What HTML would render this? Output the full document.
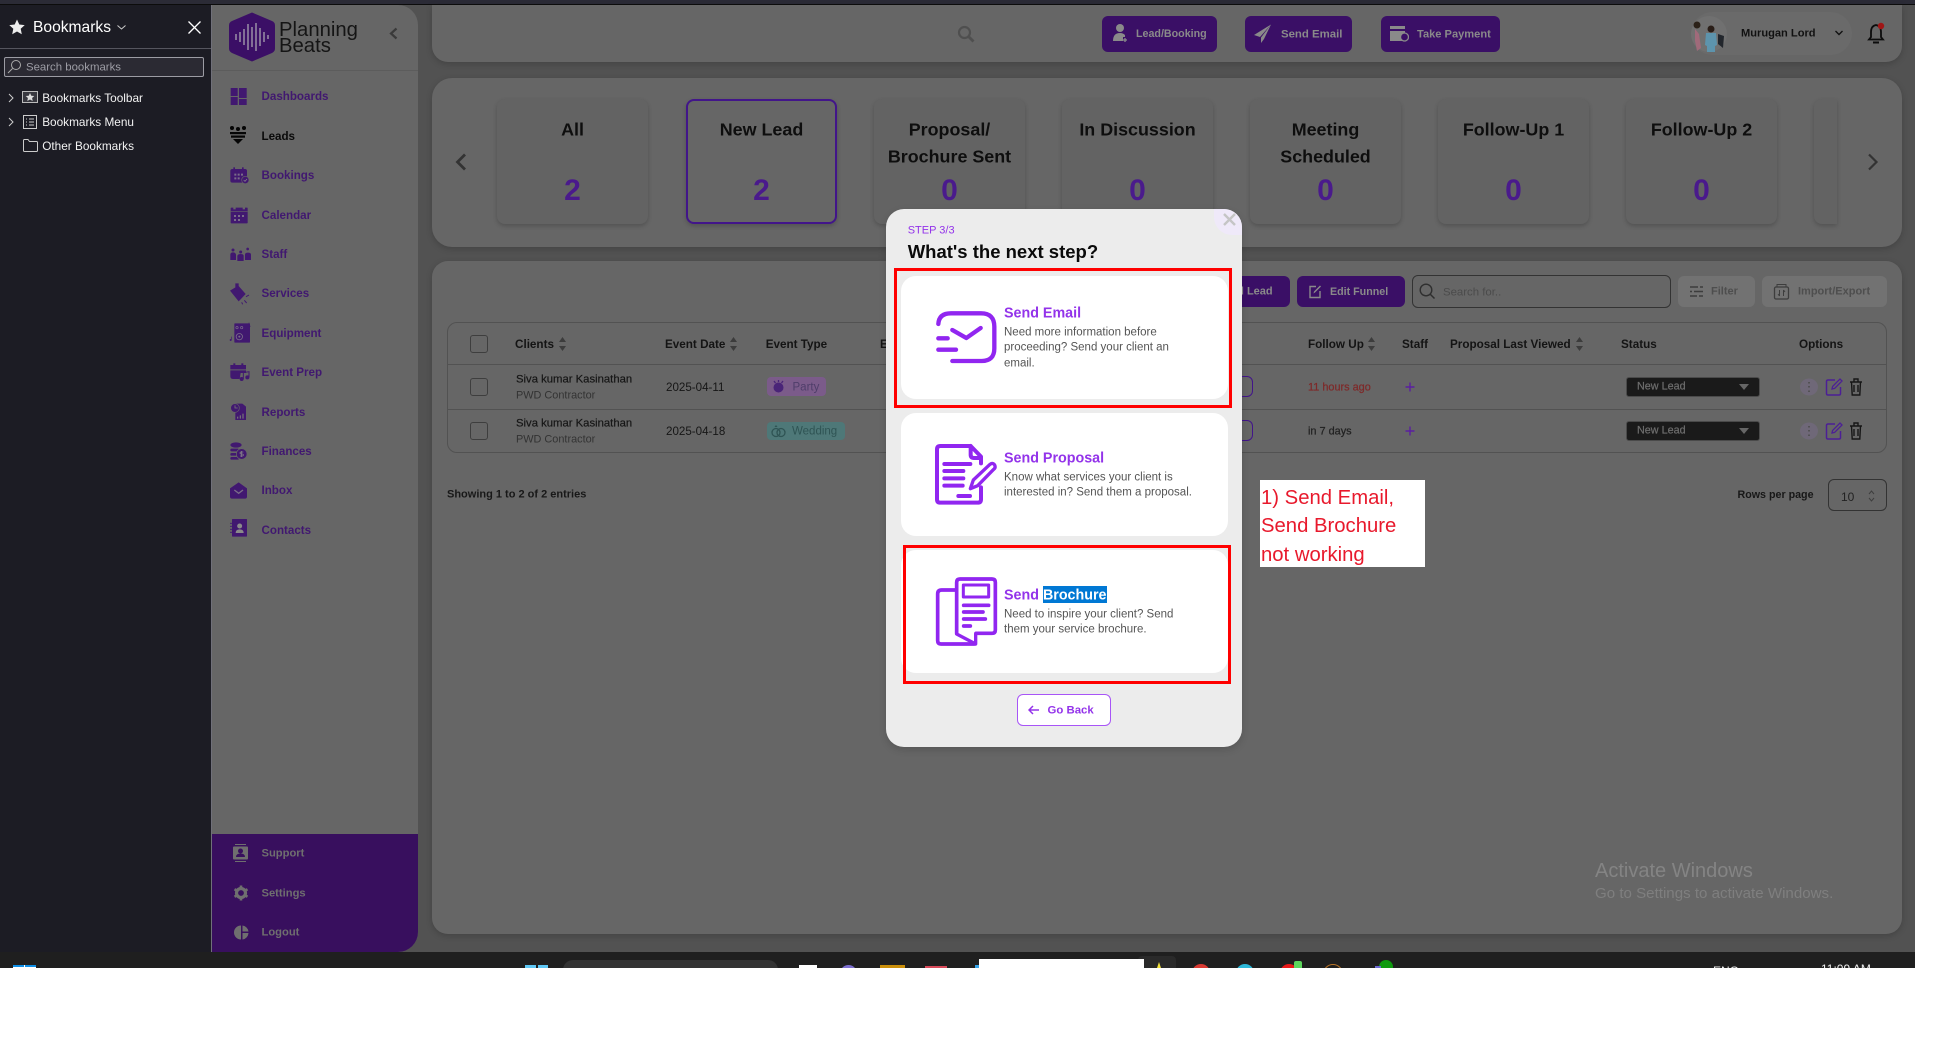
<!DOCTYPE html>
<html><head><meta charset="utf-8"><title>Planning Beats</title>
<style>
html,body{margin:0;padding:0;background:#fff}
body{width:1947px;height:1037px;position:relative;overflow:hidden;font-family:"Liberation Sans",sans-serif}
div,span,svg{position:absolute;box-sizing:border-box}
span.i{position:static}
.t{white-space:nowrap;transform:translateY(calc(-50% + 1.2px));line-height:1.2}
.nav{left:261.5px;font-size:11.6px;font-weight:700;color:#411870}
.bot{left:261.5px;font-size:11.4px;font-weight:700;color:#6f6f6f}
.panel{background:#666;box-shadow:0 2px 7px rgba(0,0,0,.18)}
.btn{background:#3a0f66;border-radius:6px}
.btxt{font-size:11px;font-weight:700;color:#8a8a8a}
.card{top:99px;width:151px;height:125px;background:#636363;border-radius:8px;box-shadow:0 2px 5px rgba(0,0,0,.2)}
.ct{left:0;width:100%;text-align:center;font-size:17.9px;font-weight:700;color:#0e0e0e;transform:translateY(calc(-50% + .4px));line-height:1.2}
.cn{left:0;width:100%;text-align:center;font-size:30px;font-weight:700;color:#4a1a8c;transform:translateY(calc(-50% + 1.2px));top:91px;line-height:1.2}
.th{font-size:11.7px;font-weight:700;color:#141414}
.cb{width:18px;height:18px;border:1px solid #3e3e3e;border-radius:3px}
.td{font-size:11.3px;color:#161616}
.mt{left:1004px;font-size:14.3px;font-weight:700;color:#9333ea}
.md{left:1004px;font-size:11.5px;color:#555;margin-top:1px}
.mc{left:901px;width:327px;height:123px;background:#fff;border-radius:15px}
.red{border:3px solid #f00}
.sel{left:1626px;width:134px;height:20px;background:#1a1a1a;border:1px solid #4a4a4a;border-radius:3px}
.tree{font-size:11.8px;color:#f2f2f2;left:42.2px}
.sort{width:7px;height:14px}
</style></head><body>
<div style="left:0;top:0;width:1915px;height:4px;background:#2b2b36"></div>
<div style="left:0;top:4px;width:1915px;height:948px;background:#525252"></div>
<div style="left:0;top:4px;width:1915px;height:1px;background:#0c0c0c;z-index:5"></div>

<!-- bookmarks -->
<div style="left:0;top:4px;width:211px;height:948px;background:#1c1c24"></div>
<div style="left:211px;top:4px;width:1px;height:948px;background:#70707a"></div>
<svg style="left:9px;top:19px" width="16" height="16" viewBox="0 0 16 16"><path d="M8 .5l2.3 5 5.4.6-4 3.7 1.1 5.4L8 12.5l-4.800 2.700 1.100-5.400-4-3.700 5.400-.6z" fill="#ededed"/></svg>
<div class="t" style="left:33px;top:27px;font-size:15.600px;color:#fff">Bookmarks</div>
<svg style="left:117px;top:24px" width="9" height="7" viewBox="0 0 9 7"><path d="M.5 1.500l4 3.500 4-3.500" stroke="#ccc" fill="none"/></svg>
<svg style="left:188px;top:21px" width="13" height="13" viewBox="0 0 13 13"><path d="M.5.5l12 12M12.500.5l-12 12" stroke="#fff" stroke-width="1.300"/></svg>
<div style="left:0;top:48px;width:211px;height:1px;background:#55555e"></div>
<div style="left:4px;top:57px;width:200px;height:20px;background:#2b2a33;border:1px solid #9c9ca4;border-radius:2px"></div>
<svg style="left:7px;top:59px" width="15" height="15" viewBox="0 0 15 15"><circle cx="9" cy="6" r="4.500" stroke="#aaa" fill="none"/><path d="M5.500 9.500L1 14" stroke="#aaa"/></svg>
<div class="t" style="left:26px;top:67px;font-size:11.400px;color:#9d9da5">Search bookmarks</div>
<svg style="left:8px;top:93px" width="6" height="10" viewBox="0 0 6 10"><path d="M1 1l4 4-4 4" stroke="#ccc" fill="none"/></svg>
<svg style="left:8px;top:117px" width="6" height="10" viewBox="0 0 6 10"><path d="M1 1l4 4-4 4" stroke="#ccc" fill="none"/></svg>
<svg style="left:22px;top:91px" width="16" height="13" viewBox="0 0 16 13"><rect x=".5" y=".5" width="15" height="11" fill="#38383f" stroke="#bbb"/><path d="M8 2l1.300 2.700 3 .3-2.200 2 .6 3L8 8.500 5.300 10l.6-3-2.200-2 3-.3z" fill="#ddd"/></svg>
<svg style="left:23px;top:115px" width="14" height="14" viewBox="0 0 14 14"><rect x=".5" y=".5" width="13" height="13" fill="none" stroke="#ccc"/><path d="M3 4h1M6 4h5M3 7h1M6 7h5M3 10h1M6 10h5" stroke="#ccc"/></svg>
<svg style="left:23px;top:139px" width="15" height="13" viewBox="0 0 15 13"><path d="M.5 1.500q0-1 1-1h3.500l1.500 2h7q1 0 1 1v8q0 1-1 1h-12q-1 0-1-1z" fill="none" stroke="#ccc"/></svg>
<div class="t tree" style="top:97px">Bookmarks Toolbar</div>
<div class="t tree" style="top:121px">Bookmarks Menu</div>
<div class="t tree" style="top:145.200px">Other Bookmarks</div>

<!-- sidebar -->
<div style="left:212px;top:5px;width:206px;height:947px;background:#666;border-radius:0 20px 20px 0"></div>
<div style="left:212px;top:70px;width:206px;height:1px;background:#5c5c5c"></div>
<svg style="left:229px;top:12px" width="46" height="50" viewBox="0 0 46 50"><path d="M23 .5L43 9q3 1.300 3 4.500v23q0 3-3 4.500L23 49.500 3 41q-3-1.500-3-4.500v-23Q0 10.300 3 9z" fill="#3b0f66"/><path d="M7 22v6M11 20v10M15 17v16M19 12v26M23 15v20M27 11v28M31 16v18M35 20v10M39 23v4" stroke="#8a7a9c" stroke-width="1.800"/></svg>
<div style="left:279px;top:22px;font-size:20.300px;line-height:16px;color:#151515;white-space:nowrap">Planning<br>Beats</div>
<svg style="left:389px;top:27px" width="9" height="13" viewBox="0 0 9 13"><path d="M7.500 1.500l-5.500 5 5.500 5" stroke="#3a3a3a" stroke-width="2.200" fill="none"/></svg>

<svg style="left:229px;top:86px" width="22" height="22" viewBox="0 0 22 22" fill="#411870"><rect x="1.700" y="2" width="7" height="8"/><rect x="10" y="2" width="7.700" height="10"/><rect x="1.700" y="11" width="7" height="8"/><rect x="10" y="13" width="7.700" height="6"/></svg>
<svg style="left:229px;top:125px" width="20" height="20" viewBox="0 0 20 20" fill="#050505"><circle cx="3" cy="3" r="2"/><circle cx="9" cy="4" r="2"/><circle cx="15" cy="3" r="2"/><rect x="1" y="7" width="16" height="2.200"/><rect x="2" y="10.500" width="14" height="2.200"/><path d="M4 14h10l-5 5z"/></svg>

<svg style="left:226px;top:160px" width="30" height="190" viewBox="0 0 90 570" fill="#411870">
<rect x="13" y="27" width="50" height="41" rx="6"/><rect x="22" y="22" width="5" height="8"/><rect x="48" y="22" width="5" height="8"/>
<path d="M25 41h6v6h-6zM35 41h6v6h-6zM45 41h6v6h-6zM25 52h6v6h-6zM35 52h6v6h-6z" fill="#7a6d88"/>
<circle cx="58" cy="60" r="11" fill="#411870" stroke="#666" stroke-width="2"/><path d="M53 60l4 4 6-7" stroke="#8a8a8a" stroke-width="2" fill="none"/>
<rect x="14" y="143" width="51" height="47" rx="2"/><path d="M14 155h51" stroke="#666" stroke-width="2"/><rect x="22" y="138" width="7" height="10" fill="#666"/><rect x="50" y="138" width="7" height="10" fill="#666"/>
<path d="M24 165h6v6h-6zM36 165h6v6h-6zM48 165h6v6h-6zM24 177h6v6h-6zM36 177h6v6h-6z" fill="#7a6d88"/>
<circle cx="21" cy="270" r="4.500"/><circle cx="44" cy="276" r="4.500"/><circle cx="65" cy="267" r="4"/>
<path d="M13 300v-16q0-7 8-7t9 7v16zM34 303v-14q0-7 10-7t9 7v14zM57 300v-16q0-6 9-6t9 6v16z"/>
<path d="M28 370h10v15H28zM12 392l25-15 22 25-21 22z"/><path d="M60 410l9-5M55 421l7 8M47 427l3 6" stroke="#411870" stroke-width="3"/>
<rect x="25" y="490" width="47" height="58" rx="2"/><circle cx="40" cy="530" r="9.500" fill="none" stroke="#7a6d88" stroke-width="2.500"/><circle cx="40" cy="530" r="3" fill="#7a6d88"/><circle cx="33" cy="503" r="3.500" fill="none" stroke="#7a6d88" stroke-width="2"/><circle cx="47" cy="503" r="3.500" fill="none" stroke="#7a6d88" stroke-width="2"/>
<circle cx="14" cy="540" r="3"/><path d="M16 540v-10" stroke="#411870" stroke-width="2"/><path d="M69 488v12l5-2" stroke="#411870" stroke-width="2" fill="none"/>
</svg>
<svg style="left:226px;top:355px" width="30" height="190" viewBox="0 0 90 570" fill="#411870">
<path d="M13 30h47v13H13zM13 46h47v8H44l-3 18H22q-9 0-9-8z"/><rect x="22" y="25" width="6" height="8"/><rect x="46" y="25" width="6" height="8"/>
<circle cx="47" cy="72" r="6"/><circle cx="64" cy="67" r="6"/><path d="M52 72V53l17-3v17" stroke="#411870" stroke-width="3" fill="none"/>
<path d="M28 146h21l11 9v40H28z"/><circle cx="27" cy="159" r="13" stroke="#666" stroke-width="2"/><path d="M27 151v8h8" stroke="#777" stroke-width="2.500" fill="none"/><path d="M35 191v-6M43 191v-10M51 191v-15" stroke="#777" stroke-width="3.500"/>
<ellipse cx="30" cy="270" rx="17" ry="8"/><rect x="13" y="281" width="26" height="8" rx="4"/><rect x="13" y="294" width="20" height="8" rx="4"/><rect x="13" y="306" width="26" height="8" rx="4"/>
<circle cx="47" cy="297" r="16" stroke="#666" stroke-width="2"/><path d="M47 288v18M52 291h-7q-3 0-3 3t3 3h4q3 0 3 3t-3 3h-7" stroke="#8a8a8a" stroke-width="2" fill="none"/>
<path d="M12 400l26-18 25 18v25q0 6-6 6H18q-6 0-6-6z"/><path d="M25 405l13 10 13-10" stroke="#7a6d88" stroke-width="4" fill="none"/>
<rect x="18" y="492" width="45" height="53" rx="2"/><circle cx="41" cy="513" r="7.500" fill="#8a8a8a"/><path d="M29 534q0-11 12-11t12 11z" fill="#8a8a8a"/><path d="M12 505h9M12 514h9M12 523h9M12 532h9" stroke="#411870" stroke-width="2.500"/>
</svg>

<div class="t nav" style="top:96px">Dashboards</div>
<div class="t nav" style="top:136px;color:#0a0a0a">Leads</div>
<div class="t nav" style="top:175px">Bookings</div>
<div class="t nav" style="top:215px">Calendar</div>
<div class="t nav" style="top:254px">Staff</div>
<div class="t nav" style="top:293px">Services</div>
<div class="t nav" style="top:333px">Equipment</div>
<div class="t nav" style="top:372px">Event Prep</div>
<div class="t nav" style="top:412px">Reports</div>
<div class="t nav" style="top:451px">Finances</div>
<div class="t nav" style="top:490px">Inbox</div>
<div class="t nav" style="top:530px">Contacts</div>

<div style="left:212px;top:834px;width:206px;height:118px;background:#380f5e;border-radius:0 0 20px 0"></div>
<svg style="left:233px;top:844px" width="16" height="18" viewBox="0 0 16 18" fill="#6f6f6f"><rect x="0" y="2.500" width="15" height="13" rx="1"/><path d="M2 .5h11M2 17.500h11" stroke="#6f6f6f"/><circle cx="7.500" cy="7" r="2.500" fill="#380f5e"/><path d="M3 13q0-3.500 4.500-3.500T12 13z" fill="#380f5e"/></svg>
<svg style="left:233px;top:885px" width="16" height="16" viewBox="0 0 16 16"><circle cx="8" cy="8" r="4.500" fill="none" stroke="#6f6f6f" stroke-width="3.200"/><path d="M8 .5v3M8 12.500v3M1.500 4.200l2.600 1.500M11.900 10.300l2.600 1.500M1.500 11.800l2.600-1.500M11.900 5.700l2.600-1.500" stroke="#6f6f6f" stroke-width="2.600"/></svg>
<svg style="left:234px;top:925px" width="15" height="15" viewBox="0 0 15 15" fill="#6f6f6f"><path d="M7 .5v14a7 7 0 0 1 0-14zM8.500.5a7 7 0 0 1 6 6h-6zM8.500 8h6a7 7 0 0 1-6 6.500z"/></svg>
<div class="t bot" style="top:853px;font-size:11.200px">Support</div>
<div class="t bot" style="top:893px;font-size:11.200px">Settings</div>
<div class="t bot" style="top:932px;font-size:11.200px">Logout</div>

<!-- top bar -->
<div class="panel" style="left:432px;top:5px;width:1470px;height:57px;border-radius:0 0 16px 16px"></div>
<svg style="left:957px;top:25px" width="18" height="18" viewBox="0 0 18 18"><circle cx="7.500" cy="7.500" r="5.500" fill="none" stroke="#4f4f4f" stroke-width="2.200"/><path d="M11.500 11.500l5 5" stroke="#4f4f4f" stroke-width="2.800"/></svg>
<div class="btn" style="left:1102px;top:16px;width:115px;height:36px"></div>
<div class="btn" style="left:1245px;top:16px;width:107px;height:36px"></div>
<div class="btn" style="left:1381px;top:16px;width:119px;height:36px"></div>
<svg style="left:1112px;top:23px" width="18" height="20" viewBox="0 0 18 20" fill="#8a8a8a"><circle cx="8" cy="5" r="4"/><path d="M1 18q0-8 7-8 3 0 5 2v2h-2v4z"/><path d="M13 15v4M11 17h4" stroke="#8a8a8a" stroke-width="1.300"/></svg>
<svg style="left:1253px;top:24px" width="19" height="20" viewBox="0 0 19 20" fill="#8a8a8a"><path d="M18 .5L1 11l6 2zM18 .5L8 13.500v5.500l3-4z"/></svg>
<svg style="left:1389px;top:26px" width="20" height="16" viewBox="0 0 20 16" fill="#8a8a8a"><rect x="1" y="0" width="15" height="3"/><rect x="1" y="5" width="15" height="10"/><circle cx="15.500" cy="11" r="4" fill="#3a0f66" stroke="#8a8a8a" stroke-width="1.300"/></svg>
<div class="t btxt" style="left:1136px;top:33px;font-size:10.700px">Lead/Booking</div>
<div class="t btxt" style="left:1281px;top:33.500px;font-size:11.400px">Send Email</div>
<div class="t btxt" style="left:1417px;top:33.500px;font-size:11.100px">Take Payment</div>
<div style="left:1691px;top:12px;width:161px;height:43px;background:#6a6a6a;border-radius:22px"></div>
<svg style="left:1691px;top:14px" width="38" height="40" viewBox="0 0 38 40"><circle cx="18" cy="20" r="18" fill="#707070"/><circle cx="6" cy="11" r="3.500" fill="#2b2118"/><circle cx="20" cy="15" r="3.500" fill="#2a1e18"/><path d="M15 19h10l1 12-2 1v6h-8v-6l-2-1z" fill="#5d94ad"/><path d="M4 15l4 5 2 14-4 3-2-10z" fill="#a06a7a"/><path d="M27 20l6 2-1 12-5-4z" fill="#22262c"/></svg>
<div class="t" style="left:1741px;top:33px;font-size:11.100px;font-weight:700;color:#111">Murugan Lord</div>
<svg style="left:1835px;top:30px" width="8" height="6" viewBox="0 0 8 6"><path d="M.5 1l3.500 3.500L7.500 1" stroke="#111" stroke-width="1.400" fill="none"/></svg>
<svg style="left:1867px;top:22px" width="20" height="22" viewBox="0 0 20 22"><path d="M9 3q-5 1-5 7v5l-2 2.500h14L14 15v-5q0-6-5-7z" fill="none" stroke="#0c0c0c" stroke-width="1.800"/><path d="M6 19.500h6v2H6z" fill="#0c0c0c"/><circle cx="14" cy="4" r="3.200" fill="#a01616"/></svg>

<!-- stages -->
<div class="panel" style="left:432px;top:78px;width:1470px;height:169px;border-radius:20px"></div>
<svg style="left:455px;top:153px" width="12" height="18" viewBox="0 0 12 18"><path d="M10 1.500L2.500 9l7.500 7.500" stroke="#333" stroke-width="2.800" fill="none"/></svg>
<svg style="left:1867px;top:153px" width="12" height="18" viewBox="0 0 12 18"><path d="M2 1.500L9.500 9 2 16.500" stroke="#333" stroke-width="2.200" fill="none"/></svg>
<div class="card" style="left:497px"><div class="ct" style="top:31px">All</div><div class="cn">2</div></div>
<div class="card" style="left:686px;background:#666;border:2px solid #42158a;box-shadow:0 2px 5px rgba(0,0,0,.2)"><div class="ct" style="top:29px">New Lead</div><div class="cn" style="top:89px">2</div></div>
<div class="card" style="left:874px"><div class="ct" style="top:31px">Proposal/</div><div class="ct" style="top:58px">Brochure Sent</div><div class="cn">0</div></div>
<div class="card" style="left:1062px"><div class="ct" style="top:31px">In Discussion</div><div class="cn">0</div></div>
<div class="card" style="left:1250px"><div class="ct" style="top:31px">Meeting</div><div class="ct" style="top:58px">Scheduled</div><div class="cn">0</div></div>
<div class="card" style="left:1438px"><div class="ct" style="top:31px">Follow-Up 1</div><div class="cn">0</div></div>
<div class="card" style="left:1626px"><div class="ct" style="top:31px">Follow-Up 2</div><div class="cn">0</div></div>
<div class="card" style="left:1814px;width:23px;border-radius:8px 0 0 8px"></div>

<!-- table panel -->
<div class="panel" style="left:432px;top:261px;width:1470px;height:673px;border-radius:16px"></div>
<div class="btn" style="left:1200px;top:276px;width:90px;height:31px"></div>
<div class="t btxt" style="left:1222.500px;top:291px;font-size:11px">Add Lead</div>
<div class="btn" style="left:1297px;top:276px;width:108px;height:31px"></div>
<svg style="left:1308px;top:284px" width="14" height="15" viewBox="0 0 14 15"><path d="M8 2.500H2v11h10V7" fill="none" stroke="#8a8a8a" stroke-width="1.400"/><path d="M5.500 9.500l.5-2L12 1.500l1 1-6 6z" fill="#8a8a8a"/></svg>
<div class="t btxt" style="left:1330px;top:291px;font-size:10.700px">Edit Funnel</div>
<div style="left:1412px;top:275px;width:259px;height:33px;border:1px solid #333;border-radius:6px"></div>
<svg style="left:1419px;top:283px" width="17" height="17" viewBox="0 0 17 17"><circle cx="7" cy="7" r="5.800" fill="none" stroke="#2f2f2f" stroke-width="1.400"/><path d="M11 11l4.500 4.500" stroke="#2f2f2f" stroke-width="1.500"/></svg>
<div class="t" style="left:1443px;top:291.500px;font-size:11.400px;color:#4b4b4b">Search for..</div>
<div style="left:1678px;top:276px;width:77px;height:31px;background:#727272;border-radius:6px"></div>
<svg style="left:1689px;top:284px" width="15" height="15" viewBox="0 0 15 15"><path d="M1 3h8M11 3h3M1 7.500h2M5 7.500h9M1 12h7M10 12h4" stroke="#3d3d3d" stroke-width="1.500"/></svg>
<div class="t" style="left:1711px;top:291px;font-size:11px;font-weight:700;color:#4e4e4e">Filter</div>
<div style="left:1762px;top:276px;width:125px;height:31px;background:#727272;border-radius:6px"></div>
<svg style="left:1773px;top:283px" width="17" height="17" viewBox="0 0 17 17"><rect x="1.500" y="4" width="14" height="12" rx="1.500" fill="none" stroke="#3d3d3d" stroke-width="1.300"/><path d="M4 4V1.500h9V4M6.500 7v6M6.500 13L5 11M10.500 7v6M10.500 7L12 9" stroke="#3d3d3d" fill="none"/></svg>
<div class="t" style="left:1798px;top:291px;font-size:11px;font-weight:700;color:#4e4e4e">Import/Export</div>

<div style="left:447px;top:322px;width:1440px;height:131px;border:1px solid #525252;border-radius:10px"></div>
<div style="left:447px;top:364px;width:1440px;height:1px;background:#525252"></div>
<div style="left:447px;top:409px;width:1440px;height:1px;background:#525252"></div>
<div class="cb" style="left:470px;top:335px"></div>
<div class="cb" style="left:470px;top:378px"></div>
<div class="cb" style="left:470px;top:422px"></div>

<div class="t th" style="left:515px;top:344px">Clients</div>
<svg class="sort" style="left:558.500px;top:337px" viewBox="0 0 7 14"><path d="M3.500 0L7 5H0zM3.500 14L0 9h7z" fill="#3c3c3c"/></svg>
<div class="t th" style="left:665px;top:344px">Event Date</div>
<svg class="sort" style="left:730px;top:337px" viewBox="0 0 7 14"><path d="M3.500 0L7 5H0zM3.500 14L0 9h7z" fill="#3c3c3c"/></svg>
<div class="t th" style="left:765.700px;top:344px">Event Type</div>
<div class="t th" style="left:880px;top:344px">E</div>
<div class="t th" style="left:1308px;top:344px">Follow Up</div>
<svg class="sort" style="left:1368px;top:337px" viewBox="0 0 7 14"><path d="M3.500 0L7 5H0zM3.500 14L0 9h7z" fill="#3c3c3c"/></svg>
<div class="t th" style="left:1402px;top:344px">Staff</div>
<div class="t th" style="left:1450px;top:344px">Proposal Last Viewed</div>
<svg class="sort" style="left:1576px;top:337px" viewBox="0 0 7 14"><path d="M3.500 0L7 5H0zM3.500 14L0 9h7z" fill="#3c3c3c"/></svg>
<div class="t th" style="left:1621px;top:344px">Status</div>
<div class="t th" style="left:1799px;top:344px">Options</div>

<div class="t td" style="left:516px;top:378.500px;-webkit-text-stroke:.2px #161616">Siva kumar Kasinathan</div>
<div class="t td" style="left:516px;top:395px;color:#333;font-size:10.900px">PWD Contractor</div>
<div class="t td" style="left:516px;top:422.500px;-webkit-text-stroke:.2px #161616">Siva kumar Kasinathan</div>
<div class="t td" style="left:516px;top:439px;color:#333;font-size:10.900px">PWD Contractor</div>
<div class="t td" style="left:666px;top:386.800px;font-size:11.600px">2025-04-11</div>
<div class="t td" style="left:666px;top:430.800px;font-size:11.600px">2025-04-18</div>

<div style="left:767px;top:377px;width:59px;height:19px;background:#7b5b8a;border-radius:4px"></div>
<svg style="left:771px;top:379px" width="15" height="15" viewBox="0 0 15 15"><circle cx="7.500" cy="8.500" r="5" fill="#4a2478"/><path d="M3 2l1.500 2M7.500 1v2M12 2l-1.500 2" stroke="#4a2478" stroke-width="1.300"/></svg>
<div class="t" style="left:792.500px;top:387px;font-size:11.500px;color:#4f3e6a">Party</div>
<div style="left:767px;top:422px;width:78px;height:18px;background:#4e7878;border-radius:4px"></div>
<svg style="left:771px;top:424px" width="15" height="14" viewBox="0 0 15 14"><circle cx="5" cy="8.500" r="4" fill="none" stroke="#2f5454" stroke-width="1.300"/><circle cx="10" cy="8.500" r="4" fill="none" stroke="#2f5454" stroke-width="1.300"/><path d="M3.500 3l1.500-2 1.500 2z" fill="#2f5454"/></svg>
<div class="t" style="left:792px;top:431px;font-size:11.500px;color:#2f5454">Wedding</div>

<div class="t" style="left:1308px;top:386.800px;font-size:10.900px;font-weight:400;color:#7e2a2a;-webkit-text-stroke:.25px #7e2a2a">11 hours ago</div>
<div class="t" style="left:1308px;top:430.800px;font-size:10.900px;color:#222;-webkit-text-stroke:.25px #222">in 7 days</div>
<svg style="left:1404.500px;top:382px" width="10" height="10" viewBox="0 0 10 10"><path d="M5 .5v9M.5 5h9" stroke="#5a1ea0" stroke-width="1.400"/></svg>
<svg style="left:1404.500px;top:426px" width="10" height="10" viewBox="0 0 10 10"><path d="M5 .5v9M.5 5h9" stroke="#5a1ea0" stroke-width="1.400"/></svg>

<div class="sel" style="top:377px"></div>
<div class="t" style="left:1637px;top:386px;font-size:10.800px;color:#6e6e6e;-webkit-text-stroke:.2px #6e6e6e">New Lead</div>
<svg style="left:1738px;top:383px" width="12" height="8" viewBox="0 0 12 8"><path d="M1 1h10L6 7z" fill="#666"/></svg>
<div class="sel" style="top:421px"></div>
<div class="t" style="left:1637px;top:430px;font-size:10.800px;color:#6e6e6e;-webkit-text-stroke:.2px #6e6e6e">New Lead</div>
<svg style="left:1738px;top:427px" width="12" height="8" viewBox="0 0 12 8"><path d="M1 1h10L6 7z" fill="#666"/></svg>

<svg style="left:1800px;top:377px" width="66" height="19" viewBox="0 0 66 19"><ellipse cx="9" cy="10" rx="9" ry="8.500" fill="#6f6878"/><path d="M9 5v1.500M9 9v1.500M9 13.500V15" stroke="#4c4c4c" stroke-width="1.600"/><path d="M35 3h-7q-1.500 0-1.500 1.500v12q0 1.500 1.500 1.500h11q1.500 0 1.500-1.500V10" fill="none" stroke="#4c1f96" stroke-width="1.500"/><path d="M32 12l.6-2.600L40 2l2 2-7.400 7.400z" fill="none" stroke="#4c1f96" stroke-width="1.300"/><path d="M50 5h12M54 4.500V2h4v2.500M51.500 5l.7 13h7.600l.7-13M54 8v7M58 8v7" fill="none" stroke="#161616" stroke-width="1.400"/></svg>
<svg style="left:1800px;top:421px" width="66" height="19" viewBox="0 0 66 19"><ellipse cx="9" cy="10" rx="9" ry="8.500" fill="#6f6878"/><path d="M9 5v1.500M9 9v1.500M9 13.500V15" stroke="#4c4c4c" stroke-width="1.600"/><path d="M35 3h-7q-1.500 0-1.500 1.500v12q0 1.500 1.500 1.500h11q1.500 0 1.500-1.500V10" fill="none" stroke="#4c1f96" stroke-width="1.500"/><path d="M32 12l.6-2.600L40 2l2 2-7.400 7.400z" fill="none" stroke="#4c1f96" stroke-width="1.300"/><path d="M50 5h12M54 4.500V2h4v2.500M51.500 5l.7 13h7.600l.7-13M54 8v7M58 8v7" fill="none" stroke="#161616" stroke-width="1.400"/></svg>

<div class="t" style="left:447px;top:494px;font-size:11px;font-weight:700;color:#181818">Showing 1 to 2 of 2 entries</div>
<div class="t" style="left:1737.500px;top:494px;font-size:10.700px;font-weight:700;color:#181818">Rows per page</div>
<div style="left:1828px;top:479px;width:59px;height:32px;border:1px solid #333;border-radius:6px"></div>
<div class="t" style="left:1841px;top:495.500px;font-size:12px;color:#222">10</div>
<svg style="left:1868px;top:490px" width="7" height="12" viewBox="0 0 7 12"><path d="M1 4l2.500-3L6 4M1 8l2.500 3L6 8" fill="none" stroke="#3e3e3e"/></svg>

<div style="left:1242px;top:376px;width:11px;height:21px;border:1px solid #42158a;border-left:0;border-radius:0 6px 6px 0"></div>
<div style="left:1242px;top:420px;width:11px;height:21px;border:1px solid #42158a;border-left:0;border-radius:0 6px 6px 0"></div>

<!-- Activate -->
<div class="t" style="left:1595px;top:869.500px;font-size:20px;color:#848484">Activate Windows</div>
<div class="t" style="left:1595px;top:892.500px;font-size:15.100px;color:#7f7f7f">Go to Settings to activate Windows.</div>

<!-- modal -->
<div style="left:886px;top:209px;width:356px;height:538px;background:#ececec;border-radius:18px;box-shadow:0 3px 8px rgba(0,0,0,.15)"></div>
<div style="left:1214px;top:209px;width:28px;height:26px;background:#efe9f9;border-radius:0 18px 0 18px"></div>
<svg style="left:1223px;top:213px" width="13" height="13" viewBox="0 0 13 13"><path d="M1 1l11 11M12 1L1 12" stroke="#c5c5c5" stroke-width="2.400"/></svg>
<div class="t" style="left:907.700px;top:229.500px;font-size:11px;color:#9333ea">STEP 3/3</div>
<div class="t" style="left:907.700px;top:251px;font-size:18.500px;font-weight:700;color:#0a0a0a">What's the next step?</div>
<div class="mc" style="top:276px"></div>
<div class="mc" style="top:413px"></div>
<div class="mc" style="top:550px"></div>

<svg style="left:890px;top:200px" width="380" height="370" viewBox="0 0 1140 1110">
<g fill="none" stroke="#9126f0" stroke-width="13" stroke-linecap="round" stroke-linejoin="round">
<path d="M145 372q2-32 38-32h90q40 0 40 40v65q0 38-38 38h-88"/>
<path d="M187 390l42 24 43-30"/>
<path d="M145 415h28M145 449h53"/>
</g>
<g fill="none" stroke="#9126f0" stroke-linecap="round" stroke-linejoin="round">
<path d="M242 738H151q-10 0-10 10v150q0 10 10 10h112q10 0 10-10v-36M273 790v-20l-31-32v26q0 10 10 10h21" stroke-width="12"/>
<path d="M163 792h78M163 813h57M163 835h57M163 857h55M205 888h35" stroke-width="12"/>
<path d="M241 866l9-26 50-47q9-6 14 2 4 8-3 13l-48 49z" stroke-width="10"/>
</g>
</svg>
<svg style="left:890px;top:540px" width="380" height="240" viewBox="0 0 1140 720">
<g fill="none" stroke="#9126f0" stroke-linecap="round" stroke-linejoin="round">
<path d="M200 280V127q0-10 10-10h96q10 0 10 10v143q0 10-10 10h-48" stroke-width="11"/>
<path d="M200 282l57 30v-30" stroke-width="10"/>
<path d="M195 150h-40q-12 0-12 12v140q0 10 10 10h100" stroke-width="11"/>
<rect x="220" y="135" width="76" height="36" stroke-width="9"/>
<path d="M221 196h75M221 216h58M221 237h65M221 258h20" stroke-width="11"/>
</g>
</svg>

<div class="t mt" style="top:312.500px">Send Email</div>
<div class="t md" style="top:331px">Need more information before</div>
<div class="t md" style="top:346px">proceeding? Send your client an</div>
<div class="t md" style="top:362px">email.</div>
<div class="t mt" style="top:458.200px">Send Proposal</div>
<div class="t md" style="top:476px">Know what services your client is</div>
<div class="t md" style="top:491px">interested in? Send them a proposal.</div>
<div style="left:1043px;top:586px;width:64px;height:17px;background:#0078d4"></div>
<div class="t mt" style="top:595px">Send <span class="i" style="color:#fff">Brochure</span></div>
<div class="t md" style="top:613px">Need to inspire your client? Send</div>
<div class="t md" style="top:628px">them your service brochure.</div>

<div class="red" style="left:894px;top:268px;width:338px;height:140px"></div>
<div class="red" style="left:903px;top:545px;width:328px;height:139px"></div>

<div style="left:1017px;top:694px;width:94px;height:32px;background:#fff;border:1.500px solid #a855f7;border-radius:6px"></div>
<svg style="left:1028px;top:705px" width="12" height="10" viewBox="0 0 12 10"><path d="M11 5H1.500M5 1L1 5l4 4" fill="none" stroke="#9333ea" stroke-width="1.500"/></svg>
<div class="t" style="left:1047.500px;top:709.500px;font-size:11.400px;font-weight:700;color:#9333ea">Go Back</div>

<!-- annotation -->
<div style="left:1260px;top:480px;width:165px;height:87px;background:#fff"></div>
<div class="t" style="left:1261px;top:496.500px;font-size:20.300px;color:#e8192c">1) Send Email,</div>
<div class="t" style="left:1261px;top:525px;font-size:20.300px;color:#e8192c">Send Brochure</div>
<div class="t" style="left:1261px;top:553.500px;font-size:20.300px;color:#e8192c">not working</div>

<!-- taskbar -->
<div style="left:0;top:952px;width:1915px;height:16px;background:#1f1f1f;overflow:hidden">
<div style="left:13px;top:13px;width:23px;height:10px;background:#0f8fe6"></div>
<div style="left:23.500px;top:13px;width:1.500px;height:5px;background:#fff"></div>
<div style="left:13px;top:15px;width:23px;height:1.500px;background:#fff"></div>
<div style="left:525px;top:13px;width:23px;height:10px;background:#5fc8f5"></div>
<div style="left:536px;top:13px;width:1.500px;height:5px;background:#1f1f1f"></div>
<div style="left:563px;top:8px;width:215px;height:20px;background:#333;border-radius:10px"></div>
<div style="left:799px;top:13px;width:18px;height:8px;background:#fff"></div>
<div style="left:840px;top:13px;width:17px;height:17px;background:#7d6fd0;border-radius:50%"></div>
<div style="left:880px;top:13px;width:25px;height:8px;background:#c98e0a"></div>
<div style="left:925px;top:14px;width:22px;height:8px;background:#d84a5a"></div>
<div style="left:975px;top:13px;width:5px;height:6px;background:#35a3e8"></div>
<div style="left:1138px;top:4px;width:38px;height:20px;background:#2a2a2a;border-radius:4px"></div>
<svg style="left:1152px;top:10px" width="14" height="14" viewBox="0 0 14 14"><path d="M7 0l2 6h5L7 14 0 6h5z" fill="#f4e33a"/></svg>
<div style="left:1192px;top:12px;width:18px;height:18px;background:#d93a32;border-radius:50%"></div>
<div style="left:1236px;top:12px;width:18px;height:18px;background:#2db8d8;border-radius:50%"></div>
<div style="left:1280px;top:12px;width:18px;height:18px;background:#e81818;border-radius:50%"></div>
<div style="left:1294px;top:9px;width:8px;height:12px;background:#5cd65c;border-radius:2px"></div>
<div style="left:1323px;top:12px;width:20px;height:20px;border:1.500px solid #b87428;border-radius:50%"></div>
<div style="left:1379px;top:8px;width:14px;height:18px;background:#0f9a0f;border-radius:7px"></div>
<div style="left:1375px;top:14px;width:6px;height:8px;background:#6b6bd0"></div>
<div class="t" style="left:1713px;top:17.800px;font-size:12px;color:#eee">ENG</div>
<div class="t" style="left:1821px;top:15.800px;font-size:12px;color:#eee">11:09 AM</div>
</div>
<div style="left:979px;top:959px;width:165px;height:9px;background:#fff"></div>
<div style="left:1915px;top:0;width:32px;height:1037px;background:#fff"></div>
</body></html>
